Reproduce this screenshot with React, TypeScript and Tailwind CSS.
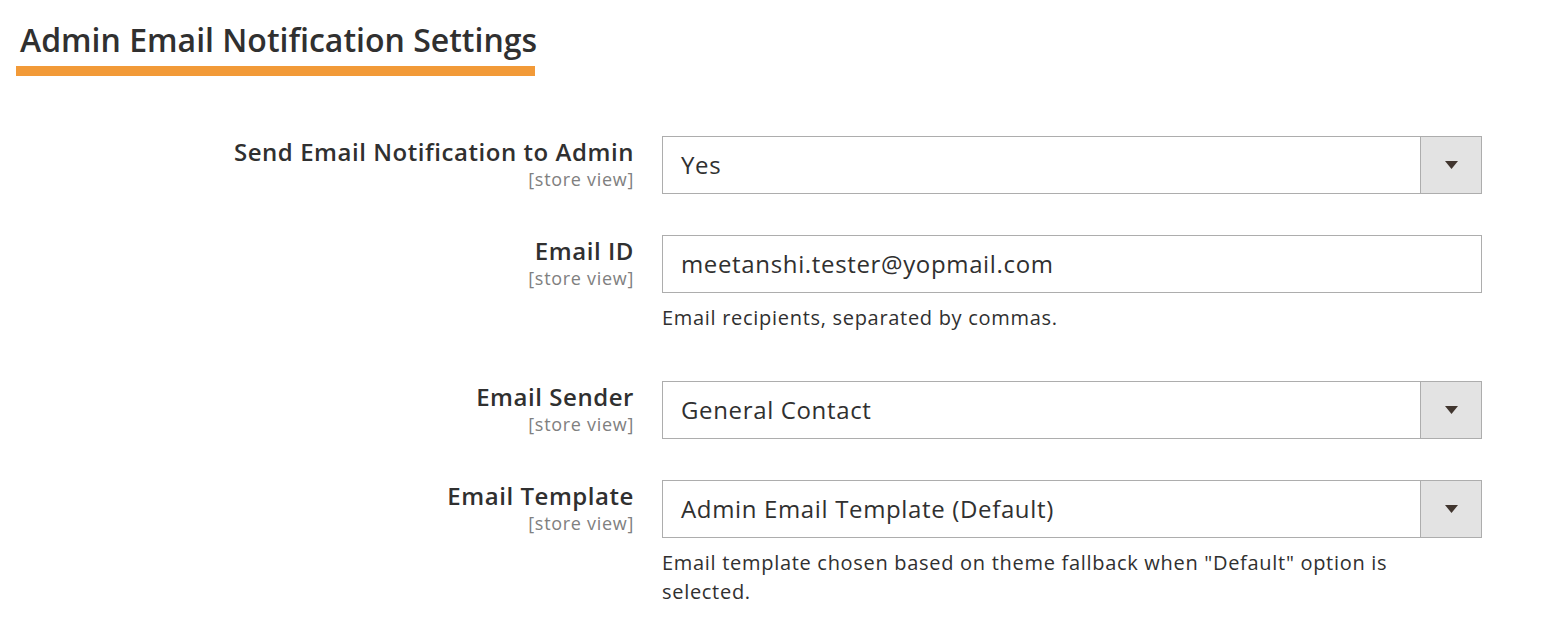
import React from "react";

const FONT = { fontFamily: '"Open Sans", "Noto Sans", sans-serif' };

function Label({ title }: { title: string }) {
  return (
    <div className="w-[634px] shrink-0 pt-[2px] text-right">
      <div className="text-[24px] font-semibold leading-[28px] tracking-[0.55px] text-[#303030]">{title}</div>
      <div className="mt-[1px] text-[18px] leading-[24px] tracking-[0.7px] text-[#808080]">[store view]</div>
    </div>
  );
}

function Select({ value }: { value: string }) {
  return (
    <div className="flex h-[58px] w-[820px] border border-[#adadad] bg-white">
      <div className="flex flex-1 items-center pl-[18px] text-[24px] tracking-[0.65px] text-[#303030]">{value}</div>
      <div className="flex w-[61px] items-center justify-center border-l border-[#adadad] bg-[#e3e3e3]">
        <svg width="13" height="8" viewBox="0 0 13 8">
          <path d="M0 0h13L6.5 8z" fill="#41362f" />
        </svg>
      </div>
    </div>
  );
}

function TextInput({ value }: { value: string }) {
  return (
    <div className="flex h-[58px] w-[820px] items-center border border-[#adadad] bg-white pl-[18px] text-[24px] tracking-[0.65px] text-[#303030]">
      {value}
    </div>
  );
}

function Note({ children }: { children: React.ReactNode }) {
  return <div className="mt-[10px] pr-[20px] text-[20px] leading-[29px] tracking-[0.7px] text-[#303030]">{children}</div>;
}

export default function App() {
  return (
    <div className="min-h-screen bg-white" style={FONT}>
      <div className="ml-[16px] w-[519px] pt-[21px]">
        <h2 className="whitespace-nowrap pl-[4px] text-[32px] font-semibold leading-[38px] text-[#303030]">
          Admin Email Notification Settings
        </h2>
        <div className="mt-[7px] h-[10px] bg-[#f29a38]" />
      </div>

      <div className="mt-[60px] flex flex-col">
        <div className="flex items-start gap-[28px]">
          <Label title="Send Email Notification to Admin" />
          <Select value="Yes" />
        </div>

        <div className="mt-[41px] flex items-start gap-[28px]">
          <Label title="Email ID" />
          <div className="w-[820px]">
            <TextInput value="meetanshi.tester@yopmail.com" />
            <Note>Email recipients, separated by commas.</Note>
          </div>
        </div>

        <div className="mt-[49px] flex items-start gap-[28px]">
          <Label title="Email Sender" />
          <Select value="General Contact" />
        </div>

        <div className="mt-[41px] flex items-start gap-[28px]">
          <Label title="Email Template" />
          <div className="w-[820px]">
            <Select value="Admin Email Template (Default)" />
            <Note>Email template chosen based on theme fallback when "Default" option is selected.</Note>
          </div>
        </div>
      </div>
    </div>
  );
}
